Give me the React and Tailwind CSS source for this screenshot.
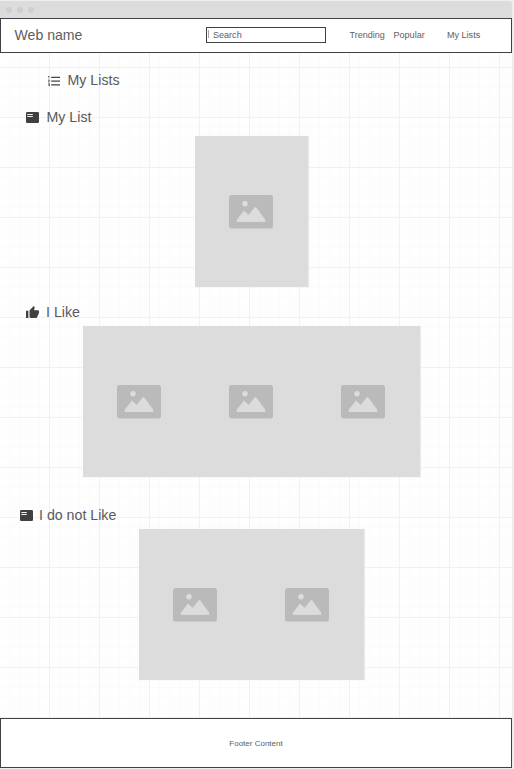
function Picture() {
  return (
    <div className="flex h-[151px] w-28 items-center justify-center bg-[#dcdcdc]">
      <svg width="44" height="34" viewBox="0 0 44 34">
        <rect width="44" height="33.6" rx="2.5" fill="#bababa" />
        <circle cx="16" cy="8.8" r="2.7" fill="#dcdcdc" />
        <path d="M8 26.5v-1.6L15 16l4.6 4.2L26.5 12 36 25v1.5z" fill="#dcdcdc" stroke="#dcdcdc" strokeWidth="0.8" strokeLinejoin="round" />
      </svg>
    </div>
  );
}

function Gallery({ count }) {
  return (
    <div className="flex w-fit bg-[#dcdcdc] pr-[0.5px] shadow-[1px_0_1px_#ececec]">
      {Array.from({ length: count }, (_, i) => <Picture key={i} />)}
    </div>
  );
}

function CardIcon() {
  return (
    <svg width="13" height="11" viewBox="0 0 13 11">
      <rect width="13" height="11" rx="1.2" fill="#404040" />
      <path d="M1.3 2.5h5.5M1.3 4.5h5.5" stroke="#f2f2f2" strokeWidth="1" />
    </svg>
  );
}

function ThumbIcon() {
  return (
    <svg width="13" height="12" viewBox="1 1 22 20" preserveAspectRatio="none" fill="#404040">
      <path d="M1 21h4V9H1v12zm22-11c0-1.1-.9-2-2-2h-6.31l.95-4.57.03-.32c0-.41-.17-.79-.44-1.06L14.17 1 7.59 7.59C7.22 7.95 7 8.45 7 9v10c0 1.1.9 2 2 2h9c.83 0 1.54-.5 1.84-1.22l3.02-7.05c.09-.23.14-.47.14-.73v-2z" />
    </svg>
  );
}

function ListIcon() {
  return (
    <svg className="mt-[2px]" width="12" height="10" viewBox="2 4 19 16" preserveAspectRatio="none" fill="#444">
      <path d="M2 17h2v.5H3v1h1v.5H2v1h3v-4H2v1zm1-9h1V4H2v1h1v3zm-1 3h1.8L2 13.1v.9h3v-1H3.2L5 10.9V10H2v1zm5-6v2h14V5H7zm0 14h14v-2H7v2zm0-6h14v-2H7v2z" />
    </svg>
  );
}

function Heading({ icon, children, className }) {
  return (
    <h2 className={`flex h-5 items-center text-[14.2px] leading-5 text-[#5a5a5a] ${className}`}>
      {icon}
      <span className="whitespace-nowrap">{children}</span>
    </h2>
  );
}

export default function App() {
  return (
    <div className="h-[769px] w-[514px] overflow-hidden bg-[#eeeeee] pt-px font-['Liberation_Sans',Arial,sans-serif] text-[#5e5e5e]">
      <div className="flex h-[17px] w-[512px] items-center gap-[5px] rounded-tr-[3px] bg-[#dcdcdc] pl-[6px]">
        <span className="size-[6px] rounded-full bg-[#cfcfcf]" />
        <span className="size-[6px] rounded-full bg-[#cfcfcf]" />
        <span className="size-[6px] rounded-full bg-[#cfcfcf]" />
      </div>
      <header className="flex h-[35px] w-[512px] items-center border border-[#404040] bg-white text-[9.05px]">
        <div className="mb-px w-[205px] pl-[13.5px] text-[14.1px] leading-5">Web name</div>
        <div className="mb-px flex h-4 w-[120px] items-center border border-[#404040] pl-px">
          <span className="mb-0.5 h-2 w-px bg-[#aaa]" />
          <span className="ml-1 mt-px">Search</span>
        </div>
        <nav className="flex whitespace-nowrap pl-[23.5px]">
          <a className="w-[44px]">Trending</a>
          <a className="w-[53.5px]">Popular</a>
          <a>My Lists</a>
        </nav>
      </header>
      <main className="h-[665px] w-[512px] bg-[#fefefe] bg-[linear-gradient(to_right,#f1f1f1_1px,transparent_1px),linear-gradient(to_bottom,#f1f1f1_1px,transparent_1px),linear-gradient(to_right,#fbfbfb_1px,transparent_1px),linear-gradient(to_bottom,#fbfbfb_1px,transparent_1px)] bg-[size:50px_50px,50px_50px,10px_10px,10px_10px] bg-[position:49px_14px,49px_14px,9px_4px,9px_4px] pt-[17px]">
        <Heading className="gap-[7.5px] pl-12" icon={<ListIcon />}>My Lists</Heading>
        <Heading className="mt-[17px] gap-[7.5px] pl-[26px]" icon={<CardIcon />}>My List</Heading>
        <div className="pl-[195px] pt-[9px]"><Gallery count={1} /></div>
        <Heading className="mt-[15px] gap-[7px] pl-[26px]" icon={<ThumbIcon />}>I Like</Heading>
        <div className="pl-[83px] pt-[4px]"><Gallery count={3} /></div>
        <Heading className="mt-[28px] gap-[6px] pl-5" icon={<CardIcon />}>I do not Like</Heading>
        <div className="pl-[139px] pt-[4px]"><Gallery count={2} /></div>
      </main>
      <footer className="flex h-[50px] w-[512px] items-center justify-center border border-[#404040] bg-white pt-px text-[8px]">Footer Content</footer>
    </div>
  );
}
